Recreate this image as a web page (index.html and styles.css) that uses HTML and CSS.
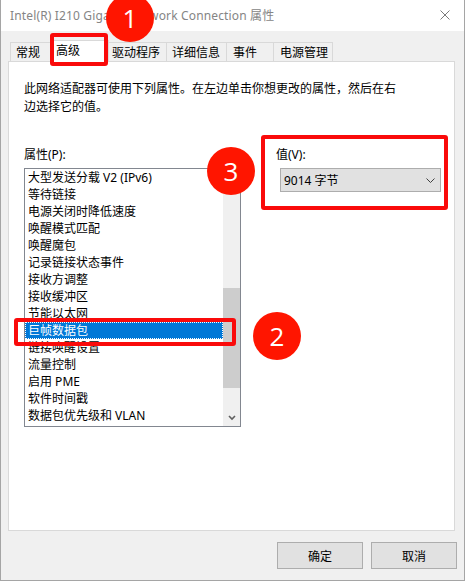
FILE: index.html
```html
<!DOCTYPE html>
<html lang="zh-CN">
<head>
    <meta charset="UTF-8">
    <meta name="viewport" content="width=device-width, initial-scale=1.0">
    <title>Intel(R) I210 Gigabit Network Connection 属性</title>
    <link rel="stylesheet" href="styles.css">
</head>
<body>
    <div class="window">
        <div class="titlebar">
            <span class="title">Intel(R) I210 Gigabit Network Connection 属性</span>
            <svg class="close" width="10" height="10" viewBox="0 0 10 10">
                <path d="M0.5 0.5 L9.5 9.5 M9.5 0.5 L0.5 9.5" stroke="#7a7a7a" stroke-width="1" fill="none"/>
            </svg>
        </div>

        <div class="content">
            <div class="tabs">
                <div class="tab tab-general">常规</div>
                <div class="tab tab-advanced active">高级</div>
                <div class="tab tab-driver">驱动程序</div>
                <div class="tab tab-details">详细信息</div>
                <div class="tab tab-events">事件</div>
                <div class="tab tab-power">电源管理</div>
            </div>

            <div class="panel">
                <p class="desc">此网络适配器可使用下列属性。在左边单击你想更改的属性，然后在右<br>边选择它的值。</p>

                <div class="props">
                    <div class="prop-col">
                        <div class="label">属性(P):</div>
                        <div class="listbox">
                            <ul class="items">
                                <li>大型发送分载 V2 (IPv6)</li>
                                <li>等待链接</li>
                                <li>电源关闭时降低速度</li>
                                <li>唤醒模式匹配</li>
                                <li>唤醒魔包</li>
                                <li>记录链接状态事件</li>
                                <li>接收方调整</li>
                                <li>接收缓冲区</li>
                                <li>节能以太网</li>
                                <li class="selected">巨帧数据包</li>
                                <li>链接唤醒设置</li>
                                <li>流量控制</li>
                                <li>启用 PME</li>
                                <li>软件时间戳</li>
                                <li>数据包优先级和 VLAN</li>
                            </ul>
                            <div class="scrollbar">
                                <div class="sb-btn"></div>
                                <div class="sb-track">
                                    <div class="sb-thumb"></div>
                                </div>
                                <div class="sb-btn">
                                    <svg width="8" height="6" viewBox="0 0 8 6">
                                        <path d="M1 1 L4 4 L7 1" stroke="#606060" stroke-width="1.6" fill="none"/>
                                    </svg>
                                </div>
                            </div>
                        </div>
                    </div>

                    <div class="value-col">
                        <div class="label">值(V):</div>
                        <div class="combo">
                            <span>9014 字节</span>
                            <svg width="9" height="5" viewBox="0 0 9 5">
                                <path d="M0.5 0.5 L4.5 4.5 L8.5 0.5" stroke="#404040" stroke-width="1" fill="none"/>
                            </svg>
                        </div>
                    </div>
                </div>
            </div>
        </div>

        <div class="footer">
            <button class="btn">确定</button>
            <button class="btn">取消</button>
        </div>

        <!-- 标注 -->
        <div class="mark mark-tab"></div>
        <div class="mark mark-item"></div>
        <div class="mark mark-value"></div>
        <div class="badge badge-1">1</div>
        <div class="badge badge-2">2</div>
        <div class="badge badge-3">3</div>
    </div>
</body>
</html>
```

FILE: styles.css
```css
* {
    margin: 0;
    padding: 0;
    box-sizing: border-box;
    font-family: "Noto Sans", "Noto Sans CJK SC", sans-serif;
}

body {
    background: #f0f0f0;
}

.window {
    position: relative;
    width: 465px;
    height: 581px;
    background: #f0f0f0;
    border: 1px solid #a5a5a5;
    border-top: none;
    overflow: hidden;
}

.titlebar {
    height: 31px;
    background: #fff;
    display: flex;
    align-items: center;
    justify-content: space-between;
    padding: 0 14px 1px 9px;
}

.title {
    font-size: 12px;
    letter-spacing: 0.15px;
    color: #858585;
}

.content {
    padding: 0 9px 0 7px;
}

/* 选项卡 */
.tabs {
    height: 30px;
    display: flex;
    align-items: flex-end;
    padding-left: 2px;
}

.tab {
    height: 19px;
    line-height: 19px;
    font-size: 12px;
    padding-left: 5px;
    border: 1px solid #d9d9d9;
    border-bottom: none;
    background: #f0f0f0;
    color: #000;
}

.tab + .tab {
    margin-left: -1px;
}

.tab.active {
    position: relative;
    z-index: 1;
    height: 22px;
    line-height: 19px;
    margin-left: -3px;
    margin-bottom: -1px;
    background: #fff;
}

.tab-general { width: 43px; }
.tab-advanced { width: 59px; }
.tab-driver { width: 59px; padding-left: 3px; }
.tab-details { width: 61px; }
.tab-events { width: 48px; padding-left: 6px; }
.tab-power { width: 60px; padding-left: 6px; }

.panel {
    height: 470px;
    background: #fff;
    border: 1px solid #d9d9d9;
    padding: 18px 0 0 15px;
}

.desc {
    font-size: 12px;
    line-height: 18px;
    color: #000;
}

.props {
    display: flex;
    margin-top: 30px;
}

.label {
    font-size: 12px;
    line-height: 18px;
    height: 18px;
}

.prop-col {
    width: 217px;
}

.listbox {
    margin-top: 4px;
    height: 259px;
    border: 1px solid #828790;
    display: flex;
}

.items {
    list-style: none;
    flex: 1;
}

.items li {
    height: 17px;
    line-height: 17px;
    font-size: 12px;
    padding-left: 3px;
    white-space: nowrap;
    color: #000;
}

.items li.selected {
    background: #0078d7;
    color: #fff;
    outline: 1px dotted #fff;
    outline-offset: -1px;
}

.scrollbar {
    width: 17px;
    background: #f0f0f0;
    display: flex;
    flex-direction: column;
}

.sb-btn {
    height: 17px;
    display: flex;
    align-items: center;
    justify-content: center;
}

.sb-track {
    flex: 1;
}

.sb-thumb {
    margin-top: 102px;
    height: 100px;
    background: #cdcdcd;
}

.value-col {
    margin-left: 35px;
}

.combo {
    margin: 4px 0 0 4px;
    width: 161px;
    height: 24px;
    background: #e1e1e1;
    border: 1px solid #adadad;
    display: flex;
    align-items: center;
    justify-content: space-between;
    padding: 0 5px 0 3px;
    font-size: 12px;
}

/* 底部按钮 */
.footer {
    display: flex;
    justify-content: flex-end;
    gap: 8px;
    padding: 11px 7px 0 0;
}

.btn {
    width: 86px;
    height: 27px;
    background: #e1e1e1;
    border: 1px solid #adadad;
    font-size: 12px;
    color: #000;
}

/* 红色标注 */
.mark {
    position: absolute;
    border: 4px solid #fa0a0a;
    border-radius: 3px;
    z-index: 5;
}

.mark-tab { left: 49px; top: 33px; width: 58px; height: 33px; }
.mark-item { left: 13px; top: 318px; width: 222px; height: 28px; }
.mark-value { left: 260px; top: 135px; width: 187px; height: 75px; }

.badge {
    position: absolute;
    z-index: 6;
    width: 48px;
    height: 48px;
    border-radius: 50%;
    background: #ff1500;
    color: #fff;
    font-family: "Open Sans", sans-serif;
    font-size: 26px;
    line-height: 48px;
    text-align: center;
}

.badge-1 { left: 105px; top: -6px; }
.badge-2 { left: 252px; top: 312px; }
.badge-3 { left: 206px; top: 147px; }
```
